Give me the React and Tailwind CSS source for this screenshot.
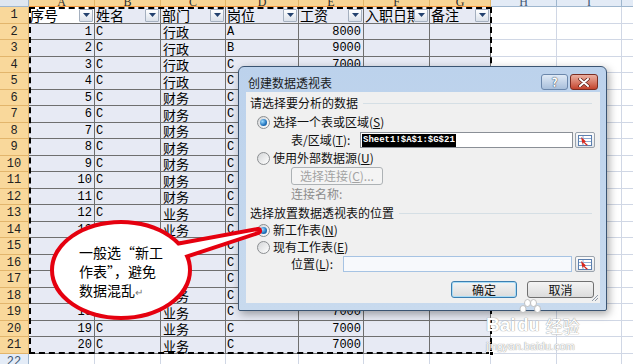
import React from 'react';

const mono = "font-['Liberation_Mono','Noto_Sans_CJK_SC',monospace]";

const cols = [
  { id: 'A', w: 'w-[66px]', sel: true },
  { id: 'B', w: 'w-[66px]', sel: true },
  { id: 'C', w: 'w-[65px]', sel: true },
  { id: 'D', w: 'w-[73px]', sel: true },
  { id: 'E', w: 'w-[65px]', sel: true },
  { id: 'F', w: 'w-[66px]', sel: true },
  { id: 'G', w: 'w-[61px]', sel: true },
  { id: 'H', w: 'w-[66px]', sel: false },
  { id: 'I', w: 'w-[65px]', sel: false },
  { id: 'J', w: 'w-[40px]', sel: false },
];

const headers = ['序号', '姓名', '部门', '岗位', '工资', '入职日期', '备注'];

const dept = (n) => (n <= 4 ? '行政' : n <= 11 ? '财务' : '业务');
const data = Array.from({ length: 20 }, (_, i) => {
  const n = i + 1;
  return [n, 'C', dept(n), n === 1 ? 'A' : n === 2 ? 'B' : 'C', n === 1 ? 8000 : n === 2 ? 9000 : 7000, '', ''];
});

function FilterBtn() {
  return (
    <span className="w-[14px] h-[13px] mr-[1px] shrink-0 rounded-[1px] border border-[#a5b0bf] bg-linear-to-b from-white to-[#dbe1ea] flex items-center justify-center">
      <svg width="7" height="4" viewBox="0 0 7 4">
        <path d="M0 0h7L3.5 4z" fill="#23416e" />
      </svg>
    </span>
  );
}

function Cell({ col, ci, r }) {
  if (!col.sel) return <div className={`${col.w} shrink-0 border-r border-b border-[#d0d7e5]`} />;
  const bg = r === 0 && ci === 0 ? 'bg-white' : 'bg-[#e7eaf4]';
  const base = `${col.w} shrink-0 border-r border-b border-[#6f6f6f] ${bg} flex items-center overflow-hidden`;
  if (r === 0) {
    return (
      <div className={base}>
        <span className="flex-1 min-w-0 whitespace-nowrap overflow-hidden pl-[1px] text-[14px] leading-[16px]">{headers[ci]}</span>
        <FilterBtn />
      </div>
    );
  }
  const v = data[r - 1][ci];
  if (ci === 0 || ci === 4) {
    return <div className={`${base} justify-end pr-[2px] ${mono} text-[12px]`}>{v}</div>;
  }
  if (ci === 2) {
    return <div className={`${base} pl-[2px] text-[13px] leading-[15px]`}>{v}</div>;
  }
  return <div className={`${base} pl-[1px] ${mono} text-[12px]`}>{v}</div>;
}

function Radio({ checked }) {
  return (
    <span className="w-[13px] h-[13px] shrink-0 rounded-full border border-[#8b8e91] bg-linear-to-br from-[#d4d6d8] to-white flex items-center justify-center">
      {checked && (
        <span className="w-[7px] h-[7px] rounded-full bg-[radial-gradient(circle_at_35%_35%,#9edcff,#1f72bd_60%,#13487f)]" />
      )}
    </span>
  );
}

function RangeBtn() {
  return (
    <span className="w-[20px] h-[16px] shrink-0 rounded-[2px] border border-[#9aa3ad] bg-linear-to-b from-[#fbfbfb] to-[#e2e5e9] flex items-center justify-center">
      <svg width="14" height="11" viewBox="0 0 14 11">
        <rect x="0.5" y="0.5" width="13" height="10" fill="#fff" stroke="#5c7fae" />
        <path d="M1 3.5h12M1 6.5h12M5 1v9" stroke="#8eabd2" />
        <path d="M3 2l5 4.5-1.5 0.5L10 10 8.5 10.5 5.5 7.5 4.5 9z" fill="#d8261b" />
      </svg>
    </span>
  );
}

export default function App() {
  return (
    <div className="relative w-[633px] h-[364px] overflow-hidden bg-white font-['Noto_Sans_CJK_SC',sans-serif] text-black">
      {/* column header */}
      <div className="flex h-[7px] overflow-hidden">
        <div className="w-[29px] shrink-0 bg-[#dfe7f1] border-r border-b border-[#9eb6ce]" />
        {cols.map((c) => (
          <div
            key={c.id}
            className={`${c.w} shrink-0 flex justify-center border-r border-b ${
              c.sel ? 'bg-[#f8d596] border-r-[#e1b56a] border-b-[#f29536] text-[#2b2b2b]' : 'bg-[#e3ebf6] border-[#9eb6ce] text-[#3e5570]'
            }`}
          >
            <span className="font-['Liberation_Serif',serif] text-[12px] leading-[14px] -mt-[5px]">{c.id}</span>
          </div>
        ))}
      </div>

      {/* rows */}
      {Array.from({ length: 21 }, (_, r) => (
        <div key={r} className={`flex ${r % 2 === 0 ? 'h-[17px]' : 'h-[16px]'}`}>
          <div className={`w-[29px] shrink-0 flex items-center justify-center border-r border-b border-[#e2b56c] bg-[#f9d89b] ${mono} text-[12px] text-[#222]`}>
            {r + 1}
          </div>
          {cols.map((c, ci) => (
            <Cell key={c.id} col={c} ci={ci} r={r} />
          ))}
        </div>
      ))}
      <div className="flex h-[10px]">
        <div className={`w-[29px] shrink-0 flex justify-center border-r border-[#9eb6ce] bg-[#e4ecf7] ${mono} text-[12px] leading-[16px] text-[#3e5570]`}>22</div>
        {cols.map((c) => (
          <div key={c.id} className={`${c.w} shrink-0 border-r border-[#d0d7e5]`} />
        ))}
      </div>

      {/* selection marquee */}
      <div className="absolute left-[29px] top-[7px] w-[463px] h-[347px] border-2 border-dashed border-black" />
      <div className="absolute left-[489px] top-[351px] w-[5px] h-[5px] bg-black border border-white" />

      {/* dialog */}
      <div className="absolute left-[238px] top-[66px] w-[369px] h-[245px] rounded-t-[6px] rounded-b-[2px] border border-[#3a5472] bg-linear-to-b from-[#bcd2ec] to-[#c8daee] shadow-[2px_3px_8px_rgba(0,0,0,0.35)] flex flex-col">
        <div className="h-[25px] shrink-0 flex items-start pt-[7px] pl-[9px] pr-[8px]">
          <span className="text-[12px] leading-[16px] mt-[1px] text-[#1a1a1a]">创建数据透视表</span>
          <div className="ml-auto flex gap-[2px]">
            <div className="w-[27px] h-[16px] rounded-[3px] border border-[#6b87ab] bg-linear-to-b from-[#e0eaf6] to-[#a8bfdb] flex items-center justify-center text-[12px] leading-none font-bold text-white [text-shadow:0_0_1px_#2c3e55,0_0_1px_#2c3e55]">
              ?
            </div>
            <div className="w-[28px] h-[16px] rounded-[3px] border border-[#7a2d22] bg-linear-to-b from-[#eab0a2] to-[#c3422c] flex items-center justify-center">
              <svg width="12" height="9" viewBox="0 0 12 9">
                <path d="M2 1l8 7M10 1l-8 7" stroke="#5a1a12" strokeWidth="3.4" strokeLinecap="round" />
                <path d="M2 1l8 7M10 1l-8 7" stroke="#fff" strokeWidth="2" strokeLinecap="round" />
              </svg>
            </div>
          </div>
        </div>

        <div className="relative ml-[7px] w-[354px] h-[211px] bg-[#f0f0f0] text-[12px] leading-[14px] text-[#111]">
          <div className="flex items-center h-[14px] mt-[4px] pl-[4px] pr-[8px]">
            <span>请选择要分析的数据</span>
            <div className="flex-1 h-px bg-[#d5dfe5] ml-[5px]" />
          </div>
          <div className="flex items-center h-[16px] mt-[4px] pl-[11px]">
            <Radio checked />
            <span className="ml-[3px]">选择一个表或区域(<u>S</u>)</span>
          </div>
          <div className="flex items-center h-[18px] mt-[1px] pl-[45px]">
            <span className="w-[69px] shrink-0">表/区域(<u>T</u>):</span>
            <div className="w-[213px] h-[16px] shrink-0 border border-[#8a8f96] bg-white flex items-center pl-[1px]">
              <span className={`bg-black text-white ${mono} font-bold text-[9px] leading-[13px] px-[1px]`}>Sheet1!$A$1:$G$21</span>
            </div>
            <span className="ml-[2px]">
              <RangeBtn />
            </span>
          </div>
          <div className="flex items-center h-[16px] mt-[1px] pl-[11px]">
            <Radio />
            <span className="ml-[3px]">使用外部数据源(<u>U</u>)</span>
          </div>
          <div className="flex items-center h-[18px] mt-[1px] pl-[45px]">
            <div className="w-[92px] h-[18px] rounded-[3px] border border-[#adb2b5] bg-[#f4f4f4] flex items-center justify-center text-[#a3a3a3]">
              选择连接(<u>C</u>)...
            </div>
          </div>
          <div className="flex items-center h-[14px] mt-[2px] pl-[45px] text-[#8c8c8c]">连接名称:</div>
          <div className="flex items-center h-[14px] mt-[5px] pl-[4px] pr-[8px]">
            <span>选择放置数据透视表的位置</span>
            <div className="flex-1 h-px bg-[#d5dfe5] ml-[5px]" />
          </div>
          <div className="flex items-center h-[16px] mt-[2px] pl-[11px]">
            <Radio checked />
            <span className="ml-[3px]">新工作表(<u>N</u>)</span>
          </div>
          <div className="flex items-center h-[16px] mt-[1px] pl-[11px]">
            <Radio />
            <span className="ml-[3px]">现有工作表(<u>E</u>)</span>
          </div>
          <div className="flex items-center h-[18px] pl-[45px]">
            <span className="w-[52px] shrink-0">位置(<u>L</u>):</span>
            <div className="w-[229px] h-[16px] shrink-0 border border-[#a6c3e3] bg-[#f7f9fc]" />
            <span className="ml-[3px]">
              <RangeBtn />
            </span>
          </div>
          <div className="flex justify-end gap-[10px] mt-[8px] pr-[6px]">
            <div className="w-[66px] h-[17px] rounded-[3px] border border-[#3c7fb1] shadow-[inset_0_0_0_1px_#a9dcf6] bg-linear-to-b from-[#f4f4f4] to-[#dcdcdc] flex items-center justify-center">确定</div>
            <div className="w-[67px] h-[17px] rounded-[3px] border border-[#707070] bg-linear-to-b from-[#f4f4f4] to-[#dcdcdc] flex items-center justify-center">取消</div>
          </div>
          <svg className="absolute right-[1px] bottom-[1px]" width="9" height="9" viewBox="0 0 9 9">
            <path d="M8 2L2 8M8 5L5 8" stroke="#8d98a6" strokeWidth="1" />
          </svg>
        </div>
      </div>

      {/* watermark */}
      <div className="absolute left-[486px] top-[315px] text-white [text-shadow:0_0_1px_#9a9a9a,0_0_1px_#9a9a9a] font-['Liberation_Sans',sans-serif]">
        <div className="flex items-end">
          <span className="text-[19px] font-bold leading-none">Bai</span>
          <span className="relative text-[18px] font-bold leading-none ml-[2px]">
            du
            <svg className="absolute -top-[17px] left-[1px]" width="22" height="16" viewBox="0 0 22 16">
              <g fill="#fff" stroke="#b5b5b5" strokeWidth="0.8">
                <ellipse cx="4" cy="10" rx="3" ry="3.5" />
                <ellipse cx="8.5" cy="4" rx="3" ry="3.5" />
                <ellipse cx="14.5" cy="4" rx="3" ry="3.5" />
                <ellipse cx="18.5" cy="10" rx="3" ry="3.5" />
              </g>
            </svg>
          </span>
          <span className="text-[17px] leading-none ml-[6px] font-['Noto_Sans_CJK_SC',sans-serif]">经验</span>
        </div>
        <div className="text-[11px] leading-[14px] mt-[5px]">jingyan.baidu.com</div>
      </div>

      {/* callout */}
      <svg className="absolute left-0 top-0 pointer-events-none" width="633" height="364" viewBox="0 0 633 364">
        <g fill="#e5000f" stroke="#e5000f" strokeWidth="8" strokeLinejoin="round">
          <ellipse cx="121" cy="270" rx="67" ry="46" />
          <polygon points="160,249 258,231 170,260" />
        </g>
        <g fill="#fff">
          <ellipse cx="121" cy="270" rx="67" ry="46" />
          <polygon points="160,249 258,231 170,260" />
        </g>
      </svg>
      <div className="absolute left-[79px] top-[243px] text-[14px] leading-[19px] text-black">
        一般选“新工
        <br />
        作表”，避免
        <br />
        数据混乱<span className="text-[10px] text-[#777]">↵</span>
      </div>
    </div>
  );
}
